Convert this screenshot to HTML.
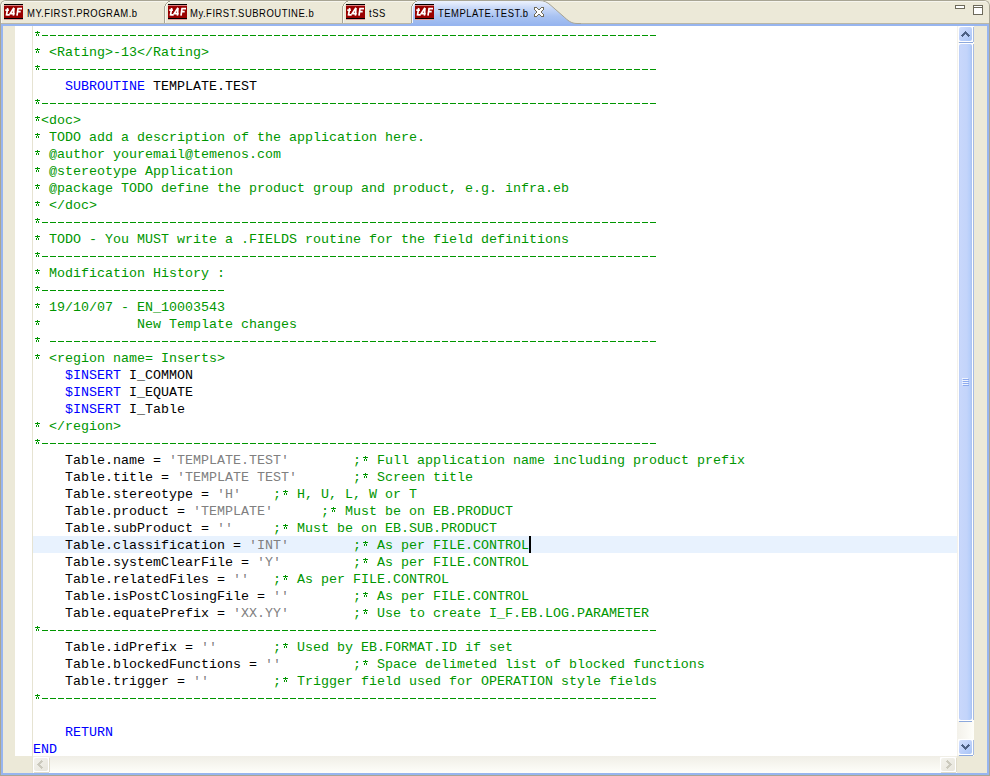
<!DOCTYPE html>
<html><head><meta charset="utf-8">
<style>
*{margin:0;padding:0;box-sizing:border-box}
html,body{width:990px;height:776px;overflow:hidden;background:#ECE9D8;position:relative}
.a{position:absolute}
.tx{position:absolute;top:7px;font-family:"Liberation Sans",sans-serif;font-size:11px;line-height:13px;color:#000;white-space:nowrap;transform-origin:0 0}
pre{font-family:"Liberation Mono",monospace;font-size:13.333px;line-height:17px;white-space:pre;position:absolute;left:0;top:1px;color:#000}
.ln{position:absolute;left:0.000px;height:17px;font-family:"Liberation Mono",monospace;font-size:13.333px;letter-spacing:0.000px;line-height:17px;white-space:pre;color:#000}
.ln .d,.ln .ast{background:none}
pre.ov,pre.ov span{color:transparent}
.c{color:#009600}
.d{display:inline-block;height:17px;vertical-align:top;background:repeating-linear-gradient(90deg,transparent 0 1px,#009600 1px 7px,transparent 7px 8px) 0 8px/8px 1px repeat-x}
.ast{display:inline-block;width:8px;height:17px;vertical-align:top;background:linear-gradient(#009600,#009600) 4px 4px/1px 1px no-repeat,linear-gradient(#009600,#009600) 2px 5px/5px 1px no-repeat,linear-gradient(#009600,#009600) 4px 6px/1px 1px no-repeat,linear-gradient(#009600,#009600) 3px 7px/1px 2px no-repeat,linear-gradient(#009600,#009600) 5px 7px/1px 2px no-repeat}
.k{color:#0000FF}
.s{color:#808080}
</style></head><body>
<div class="a" style="left:0;top:0;width:990px;height:60px;border:1px solid #A8A594;border-bottom:none;border-radius:6px 6px 0 0;background:#ECE9D8"></div>
<div class="a" style="left:1px;top:1px;width:988px;height:22px;border-top:1px solid #F6F5EE;border-left:1px solid #F6F5EE;border-radius:5px 5px 0 0"></div>
<div class="a" style="left:1px;top:23px;width:410px;height:1px;background:#BAB7A6"></div>
<div class="a" style="left:576px;top:23px;width:413px;height:1px;background:#BAB7A6"></div>
<svg class="a" style="left:164px;top:1px" width="7" height="22" shape-rendering="crispEdges"><rect x="4" y="0" width="2" height="1" fill="#A8A594"/><rect x="3" y="1" width="1" height="1" fill="#A8A594"/><rect x="4" y="1" width="2" height="1" fill="#F7F6EF"/><rect x="2" y="2" width="1" height="1" fill="#A8A594"/><rect x="3" y="2" width="1" height="1" fill="#F7F6EF"/><rect x="1" y="3" width="1" height="1" fill="#A8A594"/><rect x="2" y="3" width="1" height="1" fill="#F7F6EF"/><rect x="1" y="4" width="1" height="1" fill="#A8A594"/><rect x="2" y="4" width="1" height="1" fill="#F7F6EF"/><rect x="0" y="5" width="1" height="1" fill="#A8A594"/><rect x="1" y="5" width="1" height="1" fill="#F7F6EF"/><rect x="0" y="6" width="1" height="1" fill="#A8A594"/><rect x="1" y="6" width="1" height="1" fill="#F7F6EF"/><rect x="0" y="7" width="1" height="1" fill="#A8A594"/><rect x="1" y="7" width="1" height="1" fill="#F7F6EF"/><rect x="0" y="8" width="1" height="1" fill="#A8A594"/><rect x="1" y="8" width="1" height="1" fill="#F7F6EF"/><rect x="0" y="9" width="1" height="1" fill="#A8A594"/><rect x="1" y="9" width="1" height="1" fill="#F7F6EF"/><rect x="0" y="10" width="1" height="1" fill="#A8A594"/><rect x="1" y="10" width="1" height="1" fill="#F7F6EF"/><rect x="0" y="11" width="1" height="1" fill="#A8A594"/><rect x="1" y="11" width="1" height="1" fill="#F7F6EF"/><rect x="0" y="12" width="1" height="1" fill="#A8A594"/><rect x="1" y="12" width="1" height="1" fill="#F7F6EF"/><rect x="0" y="13" width="1" height="1" fill="#A8A594"/><rect x="1" y="13" width="1" height="1" fill="#F7F6EF"/><rect x="0" y="14" width="1" height="1" fill="#A8A594"/><rect x="1" y="14" width="1" height="1" fill="#F7F6EF"/><rect x="0" y="15" width="1" height="1" fill="#A8A594"/><rect x="1" y="15" width="1" height="1" fill="#F7F6EF"/><rect x="0" y="16" width="1" height="1" fill="#A8A594"/><rect x="1" y="16" width="1" height="1" fill="#F7F6EF"/><rect x="0" y="17" width="1" height="1" fill="#A8A594"/><rect x="1" y="17" width="1" height="1" fill="#F7F6EF"/><rect x="0" y="18" width="1" height="1" fill="#A8A594"/><rect x="1" y="18" width="1" height="1" fill="#F7F6EF"/><rect x="0" y="19" width="1" height="1" fill="#A8A594"/><rect x="1" y="19" width="1" height="1" fill="#F7F6EF"/><rect x="0" y="20" width="1" height="1" fill="#A8A594"/><rect x="1" y="20" width="1" height="1" fill="#F7F6EF"/><rect x="0" y="21" width="1" height="1" fill="#A8A594"/><rect x="1" y="21" width="1" height="1" fill="#F7F6EF"/></svg>
<svg class="a" style="left:342px;top:1px" width="7" height="22" shape-rendering="crispEdges"><rect x="4" y="0" width="2" height="1" fill="#A8A594"/><rect x="3" y="1" width="1" height="1" fill="#A8A594"/><rect x="4" y="1" width="2" height="1" fill="#F7F6EF"/><rect x="2" y="2" width="1" height="1" fill="#A8A594"/><rect x="3" y="2" width="1" height="1" fill="#F7F6EF"/><rect x="1" y="3" width="1" height="1" fill="#A8A594"/><rect x="2" y="3" width="1" height="1" fill="#F7F6EF"/><rect x="1" y="4" width="1" height="1" fill="#A8A594"/><rect x="2" y="4" width="1" height="1" fill="#F7F6EF"/><rect x="0" y="5" width="1" height="1" fill="#A8A594"/><rect x="1" y="5" width="1" height="1" fill="#F7F6EF"/><rect x="0" y="6" width="1" height="1" fill="#A8A594"/><rect x="1" y="6" width="1" height="1" fill="#F7F6EF"/><rect x="0" y="7" width="1" height="1" fill="#A8A594"/><rect x="1" y="7" width="1" height="1" fill="#F7F6EF"/><rect x="0" y="8" width="1" height="1" fill="#A8A594"/><rect x="1" y="8" width="1" height="1" fill="#F7F6EF"/><rect x="0" y="9" width="1" height="1" fill="#A8A594"/><rect x="1" y="9" width="1" height="1" fill="#F7F6EF"/><rect x="0" y="10" width="1" height="1" fill="#A8A594"/><rect x="1" y="10" width="1" height="1" fill="#F7F6EF"/><rect x="0" y="11" width="1" height="1" fill="#A8A594"/><rect x="1" y="11" width="1" height="1" fill="#F7F6EF"/><rect x="0" y="12" width="1" height="1" fill="#A8A594"/><rect x="1" y="12" width="1" height="1" fill="#F7F6EF"/><rect x="0" y="13" width="1" height="1" fill="#A8A594"/><rect x="1" y="13" width="1" height="1" fill="#F7F6EF"/><rect x="0" y="14" width="1" height="1" fill="#A8A594"/><rect x="1" y="14" width="1" height="1" fill="#F7F6EF"/><rect x="0" y="15" width="1" height="1" fill="#A8A594"/><rect x="1" y="15" width="1" height="1" fill="#F7F6EF"/><rect x="0" y="16" width="1" height="1" fill="#A8A594"/><rect x="1" y="16" width="1" height="1" fill="#F7F6EF"/><rect x="0" y="17" width="1" height="1" fill="#A8A594"/><rect x="1" y="17" width="1" height="1" fill="#F7F6EF"/><rect x="0" y="18" width="1" height="1" fill="#A8A594"/><rect x="1" y="18" width="1" height="1" fill="#F7F6EF"/><rect x="0" y="19" width="1" height="1" fill="#A8A594"/><rect x="1" y="19" width="1" height="1" fill="#F7F6EF"/><rect x="0" y="20" width="1" height="1" fill="#A8A594"/><rect x="1" y="20" width="1" height="1" fill="#F7F6EF"/><rect x="0" y="21" width="1" height="1" fill="#A8A594"/><rect x="1" y="21" width="1" height="1" fill="#F7F6EF"/></svg>
<svg class="a" style="left:411px;top:0" width="170" height="24" viewBox="0 0 170 24">
<defs><linearGradient id="ag" x1="0" y1="0" x2="0" y2="1"><stop offset="0" stop-color="#F2F6FE"/><stop offset="0.3" stop-color="#CCDBF8"/><stop offset="0.65" stop-color="#A9C3F2"/><stop offset="1" stop-color="#97B5EF"/></linearGradient></defs>
<path d="M0,25 L0,6 L6,0 L128,0 C133,0.5 136,2 140,5.5 L152,16 C157,20.5 160,23.5 166,23.5 L171,23.5 L171,25 Z" fill="url(#ag)"/><path d="M6,0.5 L128,0.5 C133,0.5 136,2 140,5.5 L152,16 C157,20.5 160,23.5 166,23.5 L171,23.5" fill="none" stroke="#A8A594" stroke-width="1"/>
</svg>
<svg class="a" style="left:411px;top:1px" width="7" height="22" shape-rendering="crispEdges"><rect x="4" y="0" width="2" height="1" fill="#A8A594"/><rect x="3" y="1" width="1" height="1" fill="#A8A594"/><rect x="4" y="1" width="2" height="1" fill="#F4F8FE"/><rect x="2" y="2" width="1" height="1" fill="#A8A594"/><rect x="3" y="2" width="1" height="1" fill="#F4F8FE"/><rect x="1" y="3" width="1" height="1" fill="#A8A594"/><rect x="2" y="3" width="1" height="1" fill="#F4F8FE"/><rect x="1" y="4" width="1" height="1" fill="#A8A594"/><rect x="2" y="4" width="1" height="1" fill="#F4F8FE"/><rect x="0" y="5" width="1" height="1" fill="#A8A594"/><rect x="1" y="5" width="1" height="1" fill="#F4F8FE"/><rect x="0" y="6" width="1" height="1" fill="#A8A594"/><rect x="1" y="6" width="1" height="1" fill="#F4F8FE"/><rect x="0" y="7" width="1" height="1" fill="#A8A594"/><rect x="1" y="7" width="1" height="1" fill="#F4F8FE"/><rect x="0" y="8" width="1" height="1" fill="#A8A594"/><rect x="1" y="8" width="1" height="1" fill="#F4F8FE"/><rect x="0" y="9" width="1" height="1" fill="#A8A594"/><rect x="1" y="9" width="1" height="1" fill="#F4F8FE"/><rect x="0" y="10" width="1" height="1" fill="#A8A594"/><rect x="1" y="10" width="1" height="1" fill="#F4F8FE"/><rect x="0" y="11" width="1" height="1" fill="#A8A594"/><rect x="1" y="11" width="1" height="1" fill="#F4F8FE"/><rect x="0" y="12" width="1" height="1" fill="#A8A594"/><rect x="1" y="12" width="1" height="1" fill="#F4F8FE"/><rect x="0" y="13" width="1" height="1" fill="#A8A594"/><rect x="1" y="13" width="1" height="1" fill="#F4F8FE"/><rect x="0" y="14" width="1" height="1" fill="#A8A594"/><rect x="1" y="14" width="1" height="1" fill="#F4F8FE"/><rect x="0" y="15" width="1" height="1" fill="#A8A594"/><rect x="1" y="15" width="1" height="1" fill="#F4F8FE"/><rect x="0" y="16" width="1" height="1" fill="#A8A594"/><rect x="1" y="16" width="1" height="1" fill="#F4F8FE"/><rect x="0" y="17" width="1" height="1" fill="#A8A594"/><rect x="1" y="17" width="1" height="1" fill="#F4F8FE"/><rect x="0" y="18" width="1" height="1" fill="#A8A594"/><rect x="1" y="18" width="1" height="1" fill="#F4F8FE"/><rect x="0" y="19" width="1" height="1" fill="#A8A594"/><rect x="1" y="19" width="1" height="1" fill="#F4F8FE"/><rect x="0" y="20" width="1" height="1" fill="#A8A594"/><rect x="1" y="20" width="1" height="1" fill="#F4F8FE"/><rect x="0" y="21" width="1" height="1" fill="#A8A594"/><rect x="1" y="21" width="1" height="1" fill="#F4F8FE"/></svg>
<svg class="a" style="left:4px;top:4px" width="19" height="16" viewBox="0 0 19 16" shape-rendering="geometricPrecision"><rect x="0" y="0" width="19" height="16" fill="#990000"/><rect x="0" y="0" width="19" height="1" fill="#000"/><rect x="0" y="1" width="19" height="1" fill="#D98080"/><rect x="0" y="14" width="19" height="1" fill="#000"/><rect x="0" y="15" width="19" height="1" fill="#E09A9A"/><path d="M3.7,4 L2.4,11.6 M1.3,6.2 L4.9,6.2 M2.3,10.9 L5.7,10.9 M10,3.8 L6.2,9.6 L10.8,9.6 M10,4 L9.4,11.6 M14.1,4 L13,11.6 M13.4,4.6 L18,4.6 M13.6,7.6 L16.7,7.6" stroke="#fff" stroke-width="1.7" fill="none"/></svg>
<svg class="a" style="left:168px;top:4px" width="19" height="16" viewBox="0 0 19 16" shape-rendering="geometricPrecision"><rect x="0" y="0" width="19" height="16" fill="#990000"/><rect x="0" y="0" width="19" height="1" fill="#000"/><rect x="0" y="1" width="19" height="1" fill="#D98080"/><rect x="0" y="14" width="19" height="1" fill="#000"/><rect x="0" y="15" width="19" height="1" fill="#E09A9A"/><path d="M3.7,4 L2.4,11.6 M1.3,6.2 L4.9,6.2 M2.3,10.9 L5.7,10.9 M10,3.8 L6.2,9.6 L10.8,9.6 M10,4 L9.4,11.6 M14.1,4 L13,11.6 M13.4,4.6 L18,4.6 M13.6,7.6 L16.7,7.6" stroke="#fff" stroke-width="1.7" fill="none"/></svg>
<svg class="a" style="left:346px;top:4px" width="19" height="16" viewBox="0 0 19 16" shape-rendering="geometricPrecision"><rect x="0" y="0" width="19" height="16" fill="#990000"/><rect x="0" y="0" width="19" height="1" fill="#000"/><rect x="0" y="1" width="19" height="1" fill="#D98080"/><rect x="0" y="14" width="19" height="1" fill="#000"/><rect x="0" y="15" width="19" height="1" fill="#E09A9A"/><path d="M3.7,4 L2.4,11.6 M1.3,6.2 L4.9,6.2 M2.3,10.9 L5.7,10.9 M10,3.8 L6.2,9.6 L10.8,9.6 M10,4 L9.4,11.6 M14.1,4 L13,11.6 M13.4,4.6 L18,4.6 M13.6,7.6 L16.7,7.6" stroke="#fff" stroke-width="1.7" fill="none"/></svg>
<svg class="a" style="left:415px;top:4px" width="19" height="16" viewBox="0 0 19 16" shape-rendering="geometricPrecision"><rect x="0" y="0" width="19" height="16" fill="#990000"/><rect x="0" y="0" width="19" height="1" fill="#000"/><rect x="0" y="1" width="19" height="1" fill="#D98080"/><rect x="0" y="14" width="19" height="1" fill="#000"/><rect x="0" y="15" width="19" height="1" fill="#E09A9A"/><path d="M3.7,4 L2.4,11.6 M1.3,6.2 L4.9,6.2 M2.3,10.9 L5.7,10.9 M10,3.8 L6.2,9.6 L10.8,9.6 M10,4 L9.4,11.6 M14.1,4 L13,11.6 M13.4,4.6 L18,4.6 M13.6,7.6 L16.7,7.6" stroke="#fff" stroke-width="1.7" fill="none"/></svg>
<div class="tx" style="left:27px;transform:scaleX(0.86);letter-spacing:0.6px">MY.FIRST.PROGRAM.b</div>
<div class="tx" style="left:190px;transform:scaleX(0.86);letter-spacing:0.6px">My.FIRST.SUBROUTINE.b</div>
<div class="tx" style="left:369px;transform:scaleX(0.86);letter-spacing:0.6px">tSS</div>
<div class="tx" style="left:438px;transform:scaleX(0.86);letter-spacing:0.6px">TEMPLATE.TEST.b</div>
<svg class="a" style="left:534px;top:7px" width="10" height="10" shape-rendering="crispEdges"><rect x="0" y="0" width="3" height="1" fill="#6F6A58"/><rect x="7" y="0" width="3" height="1" fill="#6F6A58"/><rect x="0" y="1" width="1" height="1" fill="#6F6A58"/><rect x="1" y="1" width="2" height="1" fill="#FFFFFF"/><rect x="3" y="1" width="1" height="1" fill="#6F6A58"/><rect x="6" y="1" width="1" height="1" fill="#6F6A58"/><rect x="7" y="1" width="2" height="1" fill="#FFFFFF"/><rect x="9" y="1" width="1" height="1" fill="#6F6A58"/><rect x="0" y="2" width="1" height="1" fill="#6F6A58"/><rect x="1" y="2" width="3" height="1" fill="#FFFFFF"/><rect x="4" y="2" width="2" height="1" fill="#6F6A58"/><rect x="6" y="2" width="3" height="1" fill="#FFFFFF"/><rect x="9" y="2" width="1" height="1" fill="#6F6A58"/><rect x="1" y="3" width="1" height="1" fill="#6F6A58"/><rect x="2" y="3" width="6" height="1" fill="#FFFFFF"/><rect x="8" y="3" width="1" height="1" fill="#6F6A58"/><rect x="2" y="4" width="1" height="1" fill="#6F6A58"/><rect x="3" y="4" width="4" height="1" fill="#FFFFFF"/><rect x="7" y="4" width="1" height="1" fill="#6F6A58"/><rect x="2" y="5" width="1" height="1" fill="#6F6A58"/><rect x="3" y="5" width="4" height="1" fill="#FFFFFF"/><rect x="7" y="5" width="1" height="1" fill="#6F6A58"/><rect x="1" y="6" width="1" height="1" fill="#6F6A58"/><rect x="2" y="6" width="6" height="1" fill="#FFFFFF"/><rect x="8" y="6" width="1" height="1" fill="#6F6A58"/><rect x="0" y="7" width="1" height="1" fill="#6F6A58"/><rect x="1" y="7" width="3" height="1" fill="#FFFFFF"/><rect x="4" y="7" width="2" height="1" fill="#6F6A58"/><rect x="6" y="7" width="3" height="1" fill="#FFFFFF"/><rect x="9" y="7" width="1" height="1" fill="#6F6A58"/><rect x="0" y="8" width="1" height="1" fill="#6F6A58"/><rect x="1" y="8" width="2" height="1" fill="#FFFFFF"/><rect x="3" y="8" width="1" height="1" fill="#6F6A58"/><rect x="6" y="8" width="1" height="1" fill="#6F6A58"/><rect x="7" y="8" width="2" height="1" fill="#FFFFFF"/><rect x="9" y="8" width="1" height="1" fill="#6F6A58"/><rect x="0" y="9" width="3" height="1" fill="#6F6A58"/><rect x="7" y="9" width="3" height="1" fill="#6F6A58"/></svg>
<div class="a" style="left:955px;top:5px;width:10px;height:4px;border:1px solid #6D6A5B;background:#fff"></div>
<div class="a" style="left:973px;top:5px;width:10px;height:10px;border:1px solid #6D6A5B;background:#fff"></div>
<div class="a" style="left:974px;top:7px;width:8px;height:1px;background:#6D6A5B"></div>
<div class="a" style="left:0;top:23px;width:990px;height:753px;border:1px solid #A8A594;border-top:none"></div>
<div class="a" style="left:1px;top:24px;width:988px;height:751px;border:2px solid #97B5EF"></div>
<div class="a" style="left:15px;top:26px;width:17px;height:730px;background:#fff"></div>
<div class="a" style="left:32px;top:26px;width:1px;height:747px;background:#E6E3D2"></div>
<div class="a" style="left:33px;top:26px;width:924px;height:730px;background:#fff;overflow:hidden">
<div class="a" style="left:0;top:510px;width:924px;height:17px;background:#E8F2FE"></div>
<div class="ln" style="top:1.000px"><span class="c"><span class="ast"></span><span class="d" style="width:616px"></span></span></div><div class="ln" style="top:18.000px"><span class="c"><span class="ast"></span> &lt;Rating&gt;-13&lt;/Rating&gt;</span></div><div class="ln" style="top:35.000px"><span class="c"><span class="ast"></span><span class="d" style="width:616px"></span></span></div><div class="ln" style="top:52.000px">    <span class="k">SUBROUTINE</span> TEMPLATE.TEST</div><div class="ln" style="top:69.000px"><span class="c"><span class="ast"></span><span class="d" style="width:616px"></span></span></div><div class="ln" style="top:86.000px"><span class="c"><span class="ast"></span>&lt;doc&gt;</span></div><div class="ln" style="top:103.000px"><span class="c"><span class="ast"></span> TODO add a description of the application here.</span></div><div class="ln" style="top:120.000px"><span class="c"><span class="ast"></span> @author youremail@temenos.com</span></div><div class="ln" style="top:137.000px"><span class="c"><span class="ast"></span> @stereotype Application</span></div><div class="ln" style="top:154.000px"><span class="c"><span class="ast"></span> @package TODO define the product group and product, e.g. infra.eb</span></div><div class="ln" style="top:171.000px"><span class="c"><span class="ast"></span> &lt;/doc&gt;</span></div><div class="ln" style="top:188.000px"><span class="c"><span class="ast"></span><span class="d" style="width:616px"></span></span></div><div class="ln" style="top:205.000px"><span class="c"><span class="ast"></span> TODO - You MUST write a .FIELDS routine for the field definitions</span></div><div class="ln" style="top:222.000px"><span class="c"><span class="ast"></span><span class="d" style="width:616px"></span></span></div><div class="ln" style="top:239.000px"><span class="c"><span class="ast"></span> Modification History :</span></div><div class="ln" style="top:256.000px"><span class="c"><span class="ast"></span><span class="d" style="width:184px"></span></span></div><div class="ln" style="top:273.000px"><span class="c"><span class="ast"></span> 19/10/07 - EN_10003543</span></div><div class="ln" style="top:290.000px"><span class="c"><span class="ast"></span>            New Template changes</span></div><div class="ln" style="top:307.000px"><span class="c"><span class="ast"></span> <span class="d" style="width:608px"></span></span></div><div class="ln" style="top:324.000px"><span class="c"><span class="ast"></span> &lt;region name= Inserts&gt;</span></div><div class="ln" style="top:341.000px">    <span class="k">$INSERT</span> I_COMMON</div><div class="ln" style="top:358.000px">    <span class="k">$INSERT</span> I_EQUATE</div><div class="ln" style="top:375.000px">    <span class="k">$INSERT</span> I_Table</div><div class="ln" style="top:392.000px"><span class="c"><span class="ast"></span> &lt;/region&gt;</span></div><div class="ln" style="top:409.000px"><span class="c"><span class="ast"></span><span class="d" style="width:616px"></span></span></div><div class="ln" style="top:426.000px">    Table.name = <span class="s">&#x27;TEMPLATE.TEST&#x27;</span>        <span class="c">;<span class="ast"></span> Full application name including product prefix</span></div><div class="ln" style="top:443.000px">    Table.title = <span class="s">&#x27;TEMPLATE TEST&#x27;</span>       <span class="c">;<span class="ast"></span> Screen title</span></div><div class="ln" style="top:460.000px">    Table.stereotype = <span class="s">&#x27;H&#x27;</span>    <span class="c">;<span class="ast"></span> H, U, L, W or T</span></div><div class="ln" style="top:477.000px">    Table.product = <span class="s">&#x27;TEMPLATE&#x27;</span>      <span class="c">;<span class="ast"></span> Must be on EB.PRODUCT</span></div><div class="ln" style="top:494.000px">    Table.subProduct = <span class="s">&#x27;&#x27;</span>     <span class="c">;<span class="ast"></span> Must be on EB.SUB.PRODUCT</span></div><div class="ln" style="top:511.000px">    Table.classification = <span class="s">&#x27;INT&#x27;</span>        <span class="c">;<span class="ast"></span> As per FILE.CONTROL</span></div><div class="ln" style="top:528.000px">    Table.systemClearFile = <span class="s">&#x27;Y&#x27;</span>         <span class="c">;<span class="ast"></span> As per FILE.CONTROL</span></div><div class="ln" style="top:545.000px">    Table.relatedFiles = <span class="s">&#x27;&#x27;</span>   <span class="c">;<span class="ast"></span> As per FILE.CONTROL</span></div><div class="ln" style="top:562.000px">    Table.isPostClosingFile = <span class="s">&#x27;&#x27;</span>        <span class="c">;<span class="ast"></span> As per FILE.CONTROL</span></div><div class="ln" style="top:579.000px">    Table.equatePrefix = <span class="s">&#x27;XX.YY&#x27;</span>        <span class="c">;<span class="ast"></span> Use to create I_F.EB.LOG.PARAMETER</span></div><div class="ln" style="top:596.000px"><span class="c"><span class="ast"></span><span class="d" style="width:616px"></span></span></div><div class="ln" style="top:613.000px">    Table.idPrefix = <span class="s">&#x27;&#x27;</span>       <span class="c">;<span class="ast"></span> Used by EB.FORMAT.ID if set</span></div><div class="ln" style="top:630.000px">    Table.blockedFunctions = <span class="s">&#x27;&#x27;</span>         <span class="c">;<span class="ast"></span> Space delimeted list of blocked functions</span></div><div class="ln" style="top:647.000px">    Table.trigger = <span class="s">&#x27;&#x27;</span>        <span class="c">;<span class="ast"></span> Trigger field used for OPERATION style fields</span></div><div class="ln" style="top:664.000px"><span class="c"><span class="ast"></span><span class="d" style="width:616px"></span></span></div><div class="ln" style="top:681.000px"></div><div class="ln" style="top:698.000px">    <span class="k">RETURN</span></div><div class="ln" style="top:715.000px"><span class="k">END</span></div>
<pre class="ov"><span class="c"><span class="ast"></span><span class="d" style="width:616px"></span></span>
<span class="c"><span class="ast"></span> &lt;Rating&gt;-13&lt;/Rating&gt;</span>
<span class="c"><span class="ast"></span><span class="d" style="width:616px"></span></span>
    <span class="k">SUBROUTINE</span> TEMPLATE.TEST
<span class="c"><span class="ast"></span><span class="d" style="width:616px"></span></span>
<span class="c"><span class="ast"></span>&lt;doc&gt;</span>
<span class="c"><span class="ast"></span> TODO add a description of the application here.</span>
<span class="c"><span class="ast"></span> @author youremail@temenos.com</span>
<span class="c"><span class="ast"></span> @stereotype Application</span>
<span class="c"><span class="ast"></span> @package TODO define the product group and product, e.g. infra.eb</span>
<span class="c"><span class="ast"></span> &lt;/doc&gt;</span>
<span class="c"><span class="ast"></span><span class="d" style="width:616px"></span></span>
<span class="c"><span class="ast"></span> TODO - You MUST write a .FIELDS routine for the field definitions</span>
<span class="c"><span class="ast"></span><span class="d" style="width:616px"></span></span>
<span class="c"><span class="ast"></span> Modification History :</span>
<span class="c"><span class="ast"></span><span class="d" style="width:184px"></span></span>
<span class="c"><span class="ast"></span> 19/10/07 - EN_10003543</span>
<span class="c"><span class="ast"></span>            New Template changes</span>
<span class="c"><span class="ast"></span> <span class="d" style="width:608px"></span></span>
<span class="c"><span class="ast"></span> &lt;region name= Inserts&gt;</span>
    <span class="k">$INSERT</span> I_COMMON
    <span class="k">$INSERT</span> I_EQUATE
    <span class="k">$INSERT</span> I_Table
<span class="c"><span class="ast"></span> &lt;/region&gt;</span>
<span class="c"><span class="ast"></span><span class="d" style="width:616px"></span></span>
    Table.name = <span class="s">&#x27;TEMPLATE.TEST&#x27;</span>        <span class="c">;<span class="ast"></span> Full application name including product prefix</span>
    Table.title = <span class="s">&#x27;TEMPLATE TEST&#x27;</span>       <span class="c">;<span class="ast"></span> Screen title</span>
    Table.stereotype = <span class="s">&#x27;H&#x27;</span>    <span class="c">;<span class="ast"></span> H, U, L, W or T</span>
    Table.product = <span class="s">&#x27;TEMPLATE&#x27;</span>      <span class="c">;<span class="ast"></span> Must be on EB.PRODUCT</span>
    Table.subProduct = <span class="s">&#x27;&#x27;</span>     <span class="c">;<span class="ast"></span> Must be on EB.SUB.PRODUCT</span>
    Table.classification = <span class="s">&#x27;INT&#x27;</span>        <span class="c">;<span class="ast"></span> As per FILE.CONTROL</span>
    Table.systemClearFile = <span class="s">&#x27;Y&#x27;</span>         <span class="c">;<span class="ast"></span> As per FILE.CONTROL</span>
    Table.relatedFiles = <span class="s">&#x27;&#x27;</span>   <span class="c">;<span class="ast"></span> As per FILE.CONTROL</span>
    Table.isPostClosingFile = <span class="s">&#x27;&#x27;</span>        <span class="c">;<span class="ast"></span> As per FILE.CONTROL</span>
    Table.equatePrefix = <span class="s">&#x27;XX.YY&#x27;</span>        <span class="c">;<span class="ast"></span> Use to create I_F.EB.LOG.PARAMETER</span>
<span class="c"><span class="ast"></span><span class="d" style="width:616px"></span></span>
    Table.idPrefix = <span class="s">&#x27;&#x27;</span>       <span class="c">;<span class="ast"></span> Used by EB.FORMAT.ID if set</span>
    Table.blockedFunctions = <span class="s">&#x27;&#x27;</span>         <span class="c">;<span class="ast"></span> Space delimeted list of blocked functions</span>
    Table.trigger = <span class="s">&#x27;&#x27;</span>        <span class="c">;<span class="ast"></span> Trigger field used for OPERATION style fields</span>
<span class="c"><span class="ast"></span><span class="d" style="width:616px"></span></span>

    <span class="k">RETURN</span>
<span class="k">END</span></pre>
<div class="a" style="left:496px;top:510px;width:2px;height:17px;background:#000"></div>
</div>
<div class="a" style="left:957px;top:26px;width:17px;height:730px;background:linear-gradient(90deg,#F3F1EA,#FEFEFA)"></div>
<div class="a" style="left:958px;top:26px;width:15px;height:16px;background:#fff;border-radius:1px"></div><div class="a" style="left:959px;top:27px;width:13px;height:14px;border-radius:2px;background:linear-gradient(135deg,#D3E0FD 0%,#C0D2FA 45%,#B3CBF8 75%,#A8C2F4 100%)"></div><div class="a" style="left:959px;top:42px;width:14px;height:1px;background:#8CA8DC"></div><div class="a" style="left:973px;top:27px;width:1px;height:15px;background:#A6BBE2"></div>
<svg class="a" style="left:961px;top:31px" width="9" height="6" shape-rendering="crispEdges"><rect x="4" y="0" width="1" height="1" fill="#4D6185"/><rect x="3" y="1" width="3" height="1" fill="#4D6185"/><rect x="2" y="2" width="5" height="1" fill="#4D6185"/><rect x="1" y="3" width="3" height="1" fill="#4D6185"/><rect x="5" y="3" width="3" height="1" fill="#4D6185"/><rect x="0" y="4" width="3" height="1" fill="#4D6185"/><rect x="6" y="4" width="3" height="1" fill="#4D6185"/><rect x="1" y="5" width="1" height="1" fill="#4D6185"/><rect x="7" y="5" width="1" height="1" fill="#4D6185"/></svg>
<div class="a" style="left:958px;top:43px;width:15px;height:678px;background:#fff"></div>
<div class="a" style="left:959px;top:44px;width:13px;height:676px;border-radius:2px;background:linear-gradient(90deg,#B8CBF5 0,#C8D7FB 8%,#C3D4FA 60%,#B6CEFA 85%,#A9C0F0 100%)"></div>
<div class="a" style="left:959px;top:721px;width:13px;height:1px;background:#8CA8DC"></div>
<div class="a" style="left:973px;top:44px;width:1px;height:676px;background:#A6BBE2"></div>
<div class="a" style="left:962px;top:378px;width:6px;height:1px;background:#EEF3FE"></div>
<div class="a" style="left:963px;top:379px;width:6px;height:1px;background:#8CAAEE"></div>
<div class="a" style="left:962px;top:380px;width:6px;height:1px;background:#EEF3FE"></div>
<div class="a" style="left:963px;top:381px;width:6px;height:1px;background:#8CAAEE"></div>
<div class="a" style="left:962px;top:382px;width:6px;height:1px;background:#EEF3FE"></div>
<div class="a" style="left:963px;top:383px;width:6px;height:1px;background:#8CAAEE"></div>
<div class="a" style="left:962px;top:384px;width:6px;height:1px;background:#EEF3FE"></div>
<div class="a" style="left:963px;top:385px;width:6px;height:1px;background:#8CAAEE"></div>
<div class="a" style="left:958px;top:739px;width:15px;height:16px;background:#fff;border-radius:1px"></div><div class="a" style="left:959px;top:740px;width:13px;height:14px;border-radius:2px;background:linear-gradient(135deg,#D3E0FD 0%,#C0D2FA 45%,#B3CBF8 75%,#A8C2F4 100%)"></div><div class="a" style="left:959px;top:755px;width:14px;height:1px;background:#8CA8DC"></div><div class="a" style="left:973px;top:740px;width:1px;height:15px;background:#A6BBE2"></div>
<svg class="a" style="left:961px;top:744px" width="9" height="6" shape-rendering="crispEdges"><rect x="1" y="0" width="1" height="1" fill="#4D6185"/><rect x="7" y="0" width="1" height="1" fill="#4D6185"/><rect x="0" y="1" width="3" height="1" fill="#4D6185"/><rect x="6" y="1" width="3" height="1" fill="#4D6185"/><rect x="1" y="2" width="3" height="1" fill="#4D6185"/><rect x="5" y="2" width="3" height="1" fill="#4D6185"/><rect x="2" y="3" width="5" height="1" fill="#4D6185"/><rect x="3" y="4" width="3" height="1" fill="#4D6185"/><rect x="4" y="5" width="1" height="1" fill="#4D6185"/></svg>
<div class="a" style="left:33px;top:756px;width:924px;height:17px;background:linear-gradient(180deg,#F0EEE6,#FEFEFA)"></div>
<div class="a" style="left:33px;top:757px;width:16px;height:15px;background:#fff;border-radius:1px"></div><div class="a" style="left:34px;top:758px;width:14px;height:13px;border-radius:2px;background:linear-gradient(135deg,#F3F2EC,#E8E6DD)"></div><div class="a" style="left:34px;top:772px;width:15px;height:1px;background:#E0DCCB"></div><div class="a" style="left:49px;top:758px;width:1px;height:14px;background:#E0DCCB"></div>
<svg class="a" style="left:37px;top:760px" width="6" height="9" shape-rendering="crispEdges"><rect x="4" y="0" width="1" height="1" fill="#CBC9BD"/><rect x="3" y="1" width="3" height="1" fill="#CBC9BD"/><rect x="2" y="2" width="3" height="1" fill="#CBC9BD"/><rect x="1" y="3" width="3" height="1" fill="#CBC9BD"/><rect x="0" y="4" width="3" height="1" fill="#CBC9BD"/><rect x="1" y="5" width="3" height="1" fill="#CBC9BD"/><rect x="2" y="6" width="3" height="1" fill="#CBC9BD"/><rect x="3" y="7" width="3" height="1" fill="#CBC9BD"/><rect x="4" y="8" width="1" height="1" fill="#CBC9BD"/></svg>
<div class="a" style="left:940px;top:757px;width:16px;height:15px;background:#fff;border-radius:1px"></div><div class="a" style="left:941px;top:758px;width:14px;height:13px;border-radius:2px;background:linear-gradient(135deg,#F3F2EC,#E8E6DD)"></div><div class="a" style="left:941px;top:772px;width:15px;height:1px;background:#E0DCCB"></div><div class="a" style="left:956px;top:758px;width:1px;height:14px;background:#E0DCCB"></div>
<svg class="a" style="left:946px;top:760px" width="6" height="9" shape-rendering="crispEdges"><rect x="1" y="0" width="1" height="1" fill="#CBC9BD"/><rect x="0" y="1" width="3" height="1" fill="#CBC9BD"/><rect x="1" y="2" width="3" height="1" fill="#CBC9BD"/><rect x="2" y="3" width="3" height="1" fill="#CBC9BD"/><rect x="3" y="4" width="3" height="1" fill="#CBC9BD"/><rect x="2" y="5" width="3" height="1" fill="#CBC9BD"/><rect x="1" y="6" width="3" height="1" fill="#CBC9BD"/><rect x="0" y="7" width="3" height="1" fill="#CBC9BD"/><rect x="1" y="8" width="1" height="1" fill="#CBC9BD"/></svg>
</body></html>
